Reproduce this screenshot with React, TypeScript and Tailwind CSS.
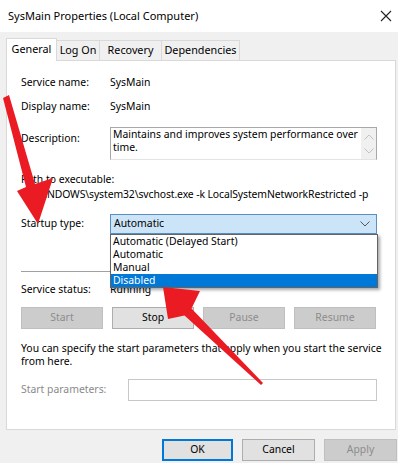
import React from "react";

const font = { fontFamily: '"Noto Sans", "Segoe UI", Arial, sans-serif' };

function Chevron({ className }: { className?: string }) {
  return (
    <svg width="10" height="6" viewBox="0 0 10 6" className={className}>
      <path d="M0.5 0.5 L5 5 L9.5 0.5" fill="none" stroke="currentColor" strokeWidth="1" />
    </svg>
  );
}

function Btn({ label, disabled, wide }: { label: string; disabled?: boolean; wide?: string }) {
  return (
    <div
      className={`h-[22px] ${wide ?? "w-[82px]"} flex items-center justify-center border ${
        disabled ? "bg-[#cccccc] border-[#bfbfbf] text-[#8c8c8c]" : "bg-[#e1e1e1] border-[#adadad] text-black"
      }`}
    >
      {label}
    </div>
  );
}

function Row({ label, value }: { label: string; value: string }) {
  return (
    <div className="h-[16px] flex items-center">
      <span className="w-[89px]">{label}</span>
      <span>{value}</span>
    </div>
  );
}

export default function App() {
  return (
    <div className="relative w-[398px] h-[463px] overflow-hidden bg-[#f0f0f0] text-[10.4px] text-black" style={font}>
      {/* Title bar */}
      <div className="h-[32px] bg-white flex items-center justify-between pl-[8px] pr-[5px]">
        <span className="text-[11px]">SysMain Properties (Local Computer)</span>
        <svg width="12" height="12" viewBox="0 0 12 12" className="mr-[1px]">
          <path d="M1 1 L11 11 M11 1 L1 11" stroke="#222" strokeWidth="1.1" />
        </svg>
      </div>

      {/* Tabs */}
      <div className="h-[28px] pl-[6px] flex items-end text-[10.8px]">
        <div className="relative z-10 h-[23px] w-[51px] -mb-[1px] bg-white border border-b-0 border-[#d9d9d9] flex items-center justify-center pb-[2px]">
          General
        </div>
        <div className="h-[20px] w-[43px] border border-l-0 border-b-0 border-[#d9d9d9] flex items-center justify-center">Log On</div>
        <div className="h-[20px] w-[62px] border border-l-0 border-b-0 border-[#d9d9d9] flex items-center justify-center">Recovery</div>
        <div className="h-[20px] w-[78px] border border-l-0 border-b-0 border-[#d9d9d9] flex items-center justify-center">Dependencies</div>
      </div>

      {/* Panel */}
      <div className="ml-[6px] w-[390px] h-[370px] bg-white border border-[#d9d9d9] pl-[14px] pr-[18px]">
        <div className="pt-[14px] flex flex-col">
          <Row label="Service name:" value="SysMain" />
          <div className="mt-[8px]">
            <Row label="Display name:" value="SysMain" />
          </div>

          <div className="mt-[12px] flex">
            <span className="w-[89px] pt-[4px]">Description:</span>
            <div className="flex-1 h-[33px] border border-[#a8a8a8] border-b-[#e3e3e3] flex">
              <div className="flex-1 pl-[2px] leading-[13px]">
                Maintains and improves system performance over time.
              </div>
              <div className="w-[15px] bg-[#f0f0f0] flex flex-col items-center justify-center gap-[8px] text-[#c2c2c2]">
                <Chevron className="rotate-180" />
                <Chevron />
              </div>
            </div>
          </div>

          <div className="mt-[12px] leading-[15px]">
            <div>Path to executable:</div>
            <div className="whitespace-nowrap tracking-[-0.1px]">C:\WINDOWS\system32\svchost.exe -k LocalSystemNetworkRestricted -p</div>
          </div>

          <div className="mt-[12px] flex items-center">
            <span className="w-[89px]">Startup type:</span>
            <div className="relative flex-1">
              <div className="h-[20px] bg-[#cce4f7] border border-[#5b8fc4] flex items-center justify-between pl-[3px] pr-[6px]">
                <span>Automatic</span>
                <Chevron className="text-[#555]" />
              </div>
              <div className="absolute z-20 top-full left-0 -right-[1px] bg-white border border-[#646464] shadow-[2px_2px_3px_rgba(0,0,0,0.35)] leading-[13px]">
                <div className="h-[13px] pl-[2px]">Automatic (Delayed Start)</div>
                <div className="h-[13px] pl-[2px]">Automatic</div>
                <div className="h-[13px] pl-[2px]">Manual</div>
                <div className="h-[13px] pl-[2px] bg-[#0078d7] text-white">Disabled</div>
              </div>
            </div>
          </div>

          <div className="mt-[37px] h-px bg-[#a0a0a0]" />

          <div className="mt-[10px]">
            <Row label="Service status:" value="Running" />
          </div>

          <div className="mt-[9px] flex gap-[9px]">
            <Btn label="Start" disabled />
            <Btn label="Stop" />
            <Btn label="Pause" disabled />
            <Btn label="Resume" disabled />
          </div>

          <div className="mt-[13px] -mr-[14px] leading-[13px]">
            You can specify the start parameters that apply when you start the service from here.
          </div>

          <div className="mt-[11px] flex items-center">
            <span className="w-[107px] text-[#8a8a8a]">Start parameters:</span>
            <div className="flex-1 h-[22px] border border-[#c8c8c8]" />
          </div>
        </div>
      </div>

      {/* Bottom buttons */}
      <div className="mt-[9px] flex justify-end gap-[9px] pr-[1px]">
        <div className="h-[22px] w-[71px] flex items-center justify-center bg-[#e1e1e1] border-2 border-[#0078d7]">OK</div>
        <Btn label="Cancel" wide="w-[73px]" />
        <Btn label="Apply" disabled wide="w-[73px]" />
      </div>

      {/* Red annotation arrows */}
      <svg className="absolute inset-0 z-30 pointer-events-none" width="398" height="463" viewBox="0 0 398 463">
        <polygon points="38,224 17,191 26,187 3,98 9,95 35,184 53,178" fill="#ea1b22" />
        <polygon points="163,287 200,291 191.5,308.5 263,383 261,385 184.5,315.5 168,319" fill="#ea1b22" />
      </svg>
    </div>
  );
}
